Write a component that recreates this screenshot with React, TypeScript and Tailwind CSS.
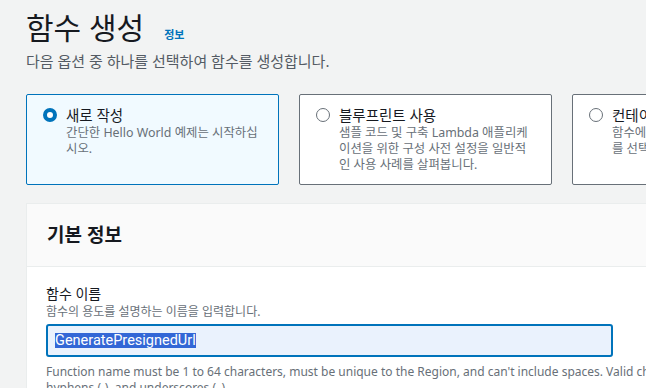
const font = { fontFamily: '"Noto Sans", "Noto Sans CJK KR", sans-serif' }

type TileProps = {
  title: string
  lines: string[]
  selected?: boolean
}

function OptionTile({ title, lines, selected }: TileProps) {
  return (
    <div
      className={`flex h-[91px] w-[253px] shrink-0 gap-[9px] rounded-[2px] border px-4 pt-[10px] ${
        selected ? 'border-[#0073bb] bg-[#f1faff]' : 'border-[#687078] bg-white'
      }`}
    >
      <div className="pt-[3px]">
        {selected ? (
          <span className="block h-[14px] w-[14px] rounded-full border-[4px] border-[#0073bb] bg-white" />
        ) : (
          <span className="block h-[14px] w-[14px] rounded-full border border-[#687078] bg-white" />
        )}
      </div>
      <div>
        <div className="text-[14.5px] leading-[20px] text-[#16191f]">{title}</div>
        {lines.map((line) => (
          <div key={line} className="whitespace-nowrap text-[12.4px] leading-[16px] text-[#687078]">
            {line}
          </div>
        ))}
      </div>
    </div>
  )
}

export default function App() {
  return (
    <div className="h-[388px] w-[646px] overflow-hidden bg-[#f2f3f3] pl-[26px] pt-[8px]" style={font}>
      <div className="flex items-baseline gap-[20px]">
        <h1 className="text-[30px] leading-[40px] text-[#16191f]">함수 생성</h1>
        <span className="text-[11px] font-bold text-[#0073bb]">정보</span>
      </div>
      <p className="mt-[3px] text-[15px] leading-[20px] text-[#545b64]">
        다음 옵션 중 하나를 선택하여 함수를 생성합니다.
      </p>

      <div className="mt-[23px] flex gap-[20px]">
        <OptionTile selected title="새로 작성" lines={['간단한 Hello World 예제는 시작하십', '시오.']} />
        <OptionTile
          title="블루프린트 사용"
          lines={['샘플 코드 및 구축 Lambda 애플리케', '이션을 위한 구성 사전 설정을 일반적', '인 사용 사례를 살펴봅니다.']}
        />
        <OptionTile
          title="컨테이너 이미지"
          lines={['함수에 배포할 컨테이너 이미지', '를 선택합니다.']}
        />
      </div>

      <section className="mt-[18px] w-[820px] border border-[#eaeded] bg-white">
        <header className="flex h-[63px] items-center border-b border-[#eaeded] bg-[#fafafa] px-[20px]">
          <h2 className="text-[19px] font-bold text-[#16191f]">기본 정보</h2>
        </header>
        <div className="px-[19px] pt-[17px]">
          <label className="block text-[14px] leading-[20px] text-[#16191f]">함수 이름</label>
          <div className="text-[12px] leading-[16px] text-[#687078]">함수의 용도를 설명하는 이름을 입력합니다.</div>
          <div className="mt-[4px] flex h-[33px] w-[567px] items-center rounded-[3px] border-2 border-[#0073bb] bg-[#eaf2fd] pl-[7px]">
            <span
              className="bg-[#3367d6] text-[14.5px] leading-[15px] text-white"
              style={{ fontFamily: 'Roboto, sans-serif' }}
            >
              GeneratePresignedUrl
            </span>
          </div>
          <p className="mt-[7px] w-[780px] text-[12px] leading-[16px] text-[#687078]">
            Function name must be 1 to 64 characters, must be unique to the Region, and can't include spaces. Valid characters are a-z, A-Z, 0-9, hyphens (-), and underscores (_).
          </p>
        </div>
      </section>
    </div>
  )
}
